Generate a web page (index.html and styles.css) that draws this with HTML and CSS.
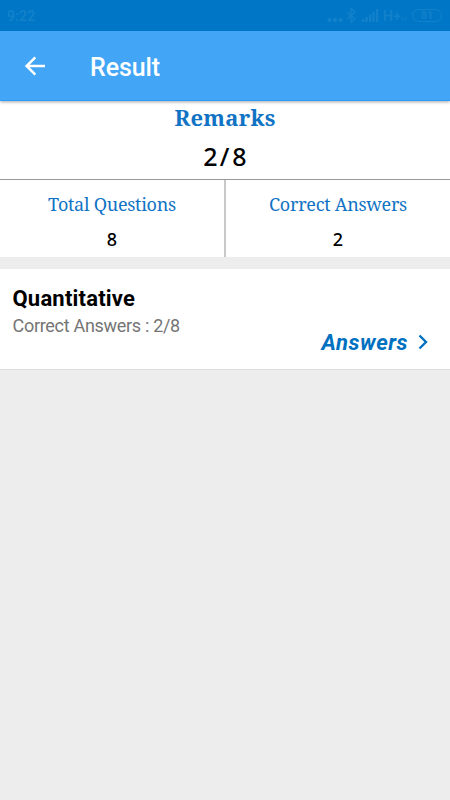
FILE: index.html
```html
<!DOCTYPE html>
<html lang="en">
<head>
<meta charset="utf-8">
<title>Result</title>
<link rel="stylesheet" href="styles.css">
</head>

<body>
<div class="status">
	<span class="time">9:22</span>
	<div class="signals">
		<svg class="dots" width="16" height="6" viewBox="0 0 16 6"><circle cx="2.5" cy="3" r="2"/><circle cx="8" cy="3" r="2"/><circle cx="13.5" cy="3" r="2"/></svg>
		<svg class="bluetooth" width="10" height="15" viewBox="0 0 10 15"><path d="M1 4l8 7-4 3.5v-14L9 4l-8 7"/></svg>
		<svg class="bars" width="17" height="13" viewBox="0 0 17 13"><path d="M1.2 13v-3M4.6 13V8M8.1 13V5.5M11.6 13V3M15.2 13V0"/></svg>
		<span class="net">H+</span>
		<svg class="data" width="6" height="6" viewBox="0 0 6 6"><path d="M1.5 1v4M4.5 1v4"/></svg>
		<span class="battery">81</span>
	</div>
</div>
<header class="toolbar">
	<a href="#" class="back"><svg width="22" height="22" viewBox="0 0 22 22"><path d="M11.3 2.3L2.6 11l8.7 8.7M3 11H21"/></svg></a>
	<h1>Result</h1>
</header>
<section class="summary">
	<div class="remarks">
		<h2>Remarks</h2>
		<p class="score">2<span>/</span>8</p>
	</div>
	<div class="counts">
		<div class="count total">
			<h3>Total Questions</h3>
			<p>8</p>
		</div>
		<div class="count correct">
			<h3>Correct Answers</h3>
			<p>2</p>
		</div>
	</div>
</section>
<section class="card">
	<h4>Quantitative</h4>
	<p>Correct Answers : 2/8</p>
	<a href="#" class="answers">Answers<svg width="10" height="16" viewBox="0 0 10 16"><path d="M1.5 1.5L8 8l-6.5 6.5"/></svg></a>
</section>
</body>
</html>
```
FILE: styles.css
```css
* {margin:0; padding:0; box-sizing:border-box;}
body {background:#ededed; font-family:Roboto, "Liberation Sans", sans-serif; color:#000;}
a {text-decoration:none;}
h1, h2, h3, h4, p {white-space:nowrap;}
svg {display:block; flex:none;}

.status {position:relative; z-index:2; height:31px; background:#0077c6; color:#1482cb; display:flex; justify-content:space-between; padding:0 8px 0 7px; line-height:32px;}
.time {font-size:14px; font-weight:500; letter-spacing:.2px;}
.signals {display:flex; align-items:center;}
.signals svg {fill:none; stroke:#1482cb; stroke-width:1.3;}
.signals .dots {fill:#1482cb; stroke:none; margin:8px 3px 0 0;}
.signals .bluetooth {margin-right:6px;}
.signals .bars {stroke-width:2.2; margin-right:4px;}
.net {font-size:14px; font-weight:500; width:17px;}
.signals .data {margin:6px 5px 0 1px; opacity:.5;}
.battery {width:30px; height:13px; border:1px solid #1482cb; border-radius:7px; font-size:11px; font-weight:500; line-height:11px; text-align:center;}

.toolbar {position:relative; height:70px; background:#42a5f5; border-bottom:1px solid #2d9cf4; display:flex; align-items:center; padding-left:24px; box-shadow:0 1px 3px rgba(0,0,0,.35);}
.back svg {margin-top:1px; fill:none; stroke:#fff; stroke-width:2.5;}
.toolbar h1 {margin:4px 0 0 44px; font-size:25px; font-weight:500; line-height:30px; letter-spacing:-.1px; color:#fff;}

.summary {background:#fff;}
.remarks {height:79px; border-bottom:1px solid #999; text-align:center;}
.remarks h2 {padding-top:1px; font:bold 22px/30px "Noto Serif", "Droid Serif", "DejaVu Serif Condensed", "DejaVu Serif", serif; letter-spacing:.25px; color:#1173c4;}
.score {margin-top:8px; font:500 25px/32px "Noto Sans", sans-serif;}
.score span {padding:0 3px 0 2px;}
.counts {display:grid; grid-template-columns:224px 226px; height:77px;}
.count {text-align:center; padding-top:12px;}
.correct {border-left:2px solid #c8c8c8;}
.count h3 {font:400 18px/24px "Noto Serif", "Droid Serif", "DejaVu Serif Condensed", "DejaVu Serif", serif; letter-spacing:-.28px; color:#1173c4;}
.count p {margin-top:11px; font:500 18px/24px "Noto Sans", sans-serif;}

.card {margin-top:12px; height:101px; padding:17px 22px 0 12.5px; background:#fff; border-bottom:1px solid #ddd;}
.card h4 {font-size:22px; font-weight:700; line-height:26px; letter-spacing:.2px;}
.card p {margin-top:3px; font-size:18px; line-height:22px; letter-spacing:-.3px; color:#757575;}
.answers {display:flex; justify-content:flex-end; align-items:center; margin-top:-8px; font-size:22px; font-style:italic; font-weight:700; line-height:28px; letter-spacing:.5px; color:#0071c1;}
.answers svg {margin-left:10px; margin-top:-2px; fill:none; stroke:#0071c1; stroke-width:2.4;}
```
